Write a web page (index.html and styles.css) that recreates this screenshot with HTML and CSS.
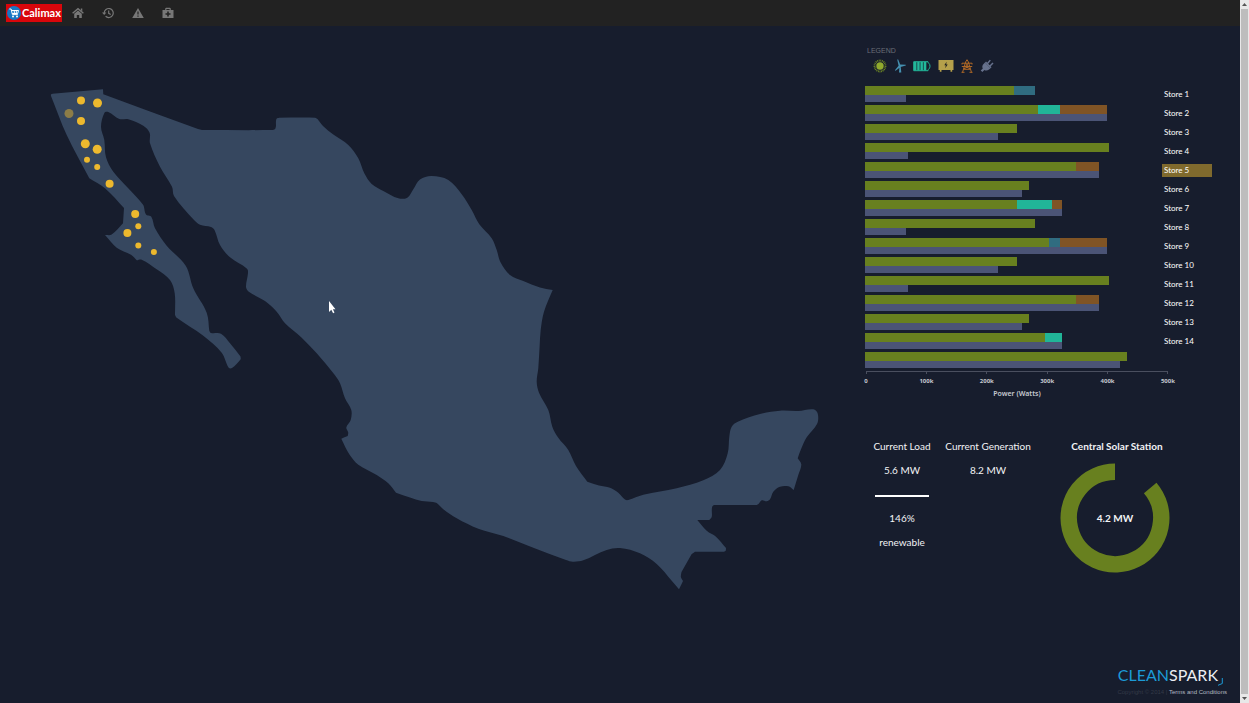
FILE: index.html
```html
<!DOCTYPE html>
<html lang="en">
<head>
<meta charset="utf-8">
<title>CleanSpark - Calimax</title>
<link rel="stylesheet" href="styles.css">
</head>
<body>
<div class="page">
  <header class="topbar">
    <a class="brand" href="#" aria-label="Calimax">
      <svg class="brand-mark" viewBox="0 0 14 14" aria-hidden="true"><circle cx="7" cy="7" r="7" fill="#1877c4"/><path d="M2.3 3h1.8l1.3 5.600h5.400M4.500 4.500h7l-.8 3H5.200M7.200 4.500l.2 3M9.400 4.500l-.2 3" fill="none" stroke="#fff" stroke-width="1"/><circle cx="6" cy="10.500" r="1" fill="#fff"/><circle cx="10" cy="10.500" r="1" fill="#fff"/></svg>
      <span>Calimax</span>
    </a>
    <nav class="nav">
      <a href="#" aria-label="Home"><svg viewBox="0 0 12 12"><path d="M.6 6.300 6 1.600l5.400 4.700" fill="none" stroke="currentColor" stroke-width="1.400"/><path d="M8.800 1.500h1.500v3l-1.500-1.300zM2.200 6.800 6 3.600l3.800 3.200V11H7.200V8H4.800v3H2.200z" fill="currentColor"/></svg></a>
      <a href="#" aria-label="History"><svg viewBox="0 0 12 12"><path d="M2.200 6a4.500 4.500 0 1 1 1.400 3.300M6.700 3.400V6.300l2 1.200" fill="none" stroke="currentColor" stroke-width="1.200"/><path d="M0 5.500h4.400L2.200 8z" fill="currentColor"/></svg></a>
      <a href="#" aria-label="Alerts"><svg viewBox="0 0 12 12"><path fill-rule="evenodd" d="M6 1 11.800 11H.2zM5.400 4.600v3h1.200v-3zm0 3.900v1.200h1.200V8.500z" fill="currentColor"/></svg></a>
      <a href="#" aria-label="Service"><svg viewBox="0 0 12 12"><path fill-rule="evenodd" d="M4 .8h4l.8.8V3H11.500v8H.5V3h2.700V1.600zM4.400 2v1h3.200V2zM5.200 4.500v1.700H3.500v1.600h1.700v1.700h1.600V7.800h1.700V6.200H6.800V4.500z" fill="currentColor"/></svg></a>
    </nav>
  </header>

  <main class="main">
    <section class="map" aria-label="Store map">
      <svg viewBox="0 26 855 600">
        <path id="land" class="land"/>
        <g class="pins">
          <circle cx="81" cy="100.500" r="4"/><circle cx="97.500" cy="103" r="4.500"/>
          <circle class="dim" cx="69" cy="113.500" r="4.500"/><circle cx="81" cy="121" r="4"/>
          <circle cx="85.300" cy="143.700" r="4.500"/><circle cx="97.200" cy="149.300" r="4.500"/>
          <circle cx="87" cy="159.700" r="3"/><circle cx="97.200" cy="167" r="3"/>
          <circle cx="109.600" cy="183.700" r="4"/><circle cx="135.200" cy="213.900" r="4"/>
          <circle cx="138.300" cy="226.300" r="3"/><circle cx="127.400" cy="233.100" r="4"/>
          <circle cx="138.300" cy="245.600" r="3"/><circle cx="153.900" cy="251.900" r="3"/>
        </g>
        <path class="cursor" d="M329 301v11l2.300-2.200 1.800 3.400 1.400-.8-1.600-3.200h2.600z"/>
      </svg>
    </section>

    <aside class="side">
      <section class="legend">
        <h2>LEGEND</h2>
        <div class="legend-icons">
          <svg width="14" height="14" viewBox="0 0 14 14"><circle cx="7" cy="7" r="5.500" fill="none" stroke="#6f8a25" stroke-width="1.800" stroke-dasharray=".9 .7"/><circle cx="7" cy="7" r="3.700" fill="#91ab2d"/></svg>
          <svg width="12" height="14" viewBox="0 0 12 14"><path d="M4.600 6.700 3.200.5h1l2 5 5.600.2v.8L6.500 8 1.600 11.800l-.7-.6zM5.500 7.500h1.200l.6 6H5z" fill="#4590b0"/></svg>
          <svg width="18" height="12" viewBox="0 0 18 12"><path d="M.7 1.700h14.300c0 2 2 1.500 2 4.500s-2 2.500-2 4.500H.7z" fill="none" stroke="#22b89b"/><path d="M1 2h2.500v8.500H1zm3.200 0h2.500v8.500H4.200zm3.200 0h2.500v8.500H7.400zm3.200 0h2.700v8.500h-2.700z" fill="#22b89b"/></svg>
          <svg width="16" height="12" viewBox="0 0 16 12"><path d="M.5 0h15v10h-1.300v1.800h-1.700V10h-9v1.800H1.800V10H.5z" fill="#b5a04b"/><path d="M8.600 1.800 6.300 5.300h1.500L7.200 8.200l2.500-3.700H8.200z" fill="#222"/></svg>
          <svg width="12" height="14" viewBox="0 0 12 14"><path d="M1.500 13.500 4.600 3 6 .7 7.400 3l3.100 10.500M1 4.200h10M.8 7.500h10.400M4.400 4l3.300 3.500-4.900 2.300M7.600 4 4.300 7.500l4.900 2.300M2.600 10.300h6.800M1 4v1.500M11 4v1.500M.5 13.300h3M8.500 13.300h3" fill="none" stroke="#ad6726" stroke-width="1"/></svg>
          <svg width="14" height="14" viewBox="0 0 14 14"><path d="m5 3.500 5.500 5.700-1.500 1.300c-1.500 1.200-3.300 1.300-4.600.5l-2 2-1.700-1.500L2.800 9.500C1.900 8 2.300 6.400 3.500 5z" fill="#66718c"/><path d="m7.300 4.800 3-3.700M9.500 7.500 13 4M5.500 3 11 8.700" stroke="#66718c" stroke-width="1.500"/></svg>
        </div>
      </section>

      <section class="chart" aria-label="Power by store">
        <ul class="rows">
          <li><div class="bars"><div class="gen"><i class="solar" style="width:49.3%"></i><i class="wind" style="width:7.1%"></i></div><div class="load" style="width:13.7%"></div></div><a href="#">Store 1</a></li>
          <li><div class="bars"><div class="gen"><i class="solar" style="width:57.3%"></i><i class="battery" style="width:7.3%"></i><i class="grid" style="width:15.6%"></i></div><div class="load" style="width:80.2%"></div></div><a href="#">Store 2</a></li>
          <li><div class="bars"><div class="gen"><i class="solar" style="width:50.3%"></i></div><div class="load" style="width:44.2%"></div></div><a href="#">Store 3</a></li>
          <li><div class="bars"><div class="gen"><i class="solar" style="width:80.8%"></i></div><div class="load" style="width:14.1%"></div></div><a href="#">Store 4</a></li>
          <li><div class="bars"><div class="gen"><i class="solar" style="width:69.9%"></i><i class="grid" style="width:7.6%"></i></div><div class="load" style="width:77.5%"></div></div><a class="active" href="#">Store 5</a></li>
          <li><div class="bars"><div class="gen"><i class="solar" style="width:54.3%"></i></div><div class="load" style="width:52%"></div></div><a href="#">Store 6</a></li>
          <li><div class="bars"><div class="gen"><i class="solar" style="width:50.3%"></i><i class="battery" style="width:11.6%"></i><i class="grid" style="width:3.3%"></i></div><div class="load" style="width:65.2%"></div></div><a href="#">Store 7</a></li>
          <li><div class="bars"><div class="gen"><i class="solar" style="width:56.3%"></i></div><div class="load" style="width:13.7%"></div></div><a href="#">Store 8</a></li>
          <li><div class="bars"><div class="gen"><i class="solar" style="width:60.9%"></i><i class="wind" style="width:3.7%"></i><i class="grid" style="width:15.6%"></i></div><div class="load" style="width:80.2%"></div></div><a href="#">Store 9</a></li>
          <li><div class="bars"><div class="gen"><i class="solar" style="width:50.3%"></i></div><div class="load" style="width:44.2%"></div></div><a href="#">Store 10</a></li>
          <li><div class="bars"><div class="gen"><i class="solar" style="width:80.8%"></i></div><div class="load" style="width:14.1%"></div></div><a href="#">Store 11</a></li>
          <li><div class="bars"><div class="gen"><i class="solar" style="width:69.9%"></i><i class="grid" style="width:7.6%"></i></div><div class="load" style="width:77.5%"></div></div><a href="#">Store 12</a></li>
          <li><div class="bars"><div class="gen"><i class="solar" style="width:54.3%"></i></div><div class="load" style="width:52%"></div></div><a href="#">Store 13</a></li>
          <li><div class="bars"><div class="gen"><i class="solar" style="width:59.6%"></i><i class="battery" style="width:5.6%"></i></div><div class="load" style="width:65.2%"></div></div><a href="#">Store 14</a></li>
          <li><div class="bars"><div class="gen"><i class="solar" style="width:86.8%"></i></div><div class="load" style="width:84.4%"></div></div></li>
        </ul>
        <div class="axis">
          <div class="ticks"><span></span><span></span><span></span><span></span><span></span></div>
          <div class="tick-labels"><span>0</span><span>100k</span><span>200k</span><span>300k</span><span>400k</span><span>500k</span></div>
          <p class="axis-title">Power (Watts)</p>
        </div>
      </section>

      <section class="stats">
        <div class="stat">
          <h3>Current Load</h3>
          <p>5.6 MW</p>
          <hr>
          <p>146%</p>
          <p>renewable</p>
        </div>
        <div class="stat wide">
          <h3>Current Generation</h3>
          <p>8.2 MW</p>
        </div>
        <div class="station">
          <h3>Central Solar Station</h3>
          <div class="donut">
            <svg viewBox="0 0 110 110" aria-hidden="true"><path d="M90.200 25A46.250 46.250 0 1 1 55 8.750" fill="none" stroke="#68801f" stroke-width="16.500"/></svg>
            <strong>4.2 MW</strong>
          </div>
        </div>
      </section>

      <footer class="footer">
        <div class="logo"><span class="clean">CLEAN</span><span>SPARK</span><svg width="5" height="8" viewBox="0 0 5 8" aria-hidden="true"><path d="M4.300 0v5.500L0 7.300" fill="none" stroke="#1c9ad6"/></svg></div>
        <p>Copyright © 2014 | <a href="#">Terms and Conditions</a></p>
      </footer>
    </aside>
  </main>
</div>
<div class="scrollbar" aria-hidden="true">
  <svg viewBox="0 0 9 9"><path d="M2 6h5L4.500 3z" fill="#555"/></svg>
  <div class="thumb"></div>
  <svg viewBox="0 0 9 9"><path d="M2 3h5L4.500 6z" fill="#555"/></svg>
</div>
<script src="map.js"></script>
</body>
</html>
```
FILE: map.js
```js
// Coastline as runs of points. Each run is a smooth curve; runs meet in corners.
const runs = [
  [[51,96],[51,94.5],[52.5,93.7]],
  [[52.5,93.7],[103,89.3]], [[103,89.3],[103.3,94.3]], [[103.3,94.3],[198,129],[202,130]],
  [[202,130],[272,130],[275,129],[276,126]], [[276,126],[276,121],[276.800,118.500],[279,117.700]],
  [[279,117.7],[315,117.7],[317.5,119]],
  [[317.5,119],[323,126],[333.3,134.5],[348.3,145],[358.3,158.3],[364.3,173.3],[371.7,184],[383.3,191],[398.3,198.3],[407.3,197.7],[413.3,189.3],[420,179.5],[431.7,176],[448.3,180],[461.7,194.3],[471.7,210],[479.3,224.3],[491.7,238.3],[496.7,250],[500.5,262.3],[510,275],[523.3,281],[540,287.5],[552.7,290]],
  [[552.7,290],[544,311.7],[540.7,330],[539.7,345],[538.3,368.3],[536.7,381.7],[539,392.7],[548.3,410],[552.3,426.7],[558.3,437.7],[568.3,450],[576,466],[587.3,481.7]],
  [[587.3,481.7],[599,485.5],[610,487.7],[618.3,492.7],[625,499.5],[628.3,500],[643.3,494.7],[676.7,488.3],[703.3,480.3],[720,470],[727.7,453.3],[729.3,436.7],[731.7,426.7],[738.3,421.5],[760,414],[780,410.7],[798.3,411],[813.3,409.3],[817.7,413.5],[817,424],[806.7,437.3],[800.7,450],[797.7,458.3]],
  [[797.7,458.3],[801.3,464.5],[798.3,475],[793.7,490]],
  [[793.7,490],[788.3,486.3],[780,486.7],[773.3,491.7],[770,499.3],[766.7,501.3],[761.7,500.3],[758.500,504],[756.7,505]],
  [[756.7,505],[714,505]], [[714,505],[712.3,506.5],[711.8,510],[711.7,517],[709.3,520]], [[709.3,520],[697.3,520]],
  [[697.3,520],[706.7,530.7],[716,536.7],[726,548]], [[726,548],[725.700,550.700],[724,551.7]], [[724,551.7],[695,551.7]],
  [[695,551.7],[691.7,554]], [[691.7,554],[681.500,572]], [[681.5,572],[680.900,577],[683,581]], [[683,581],[679,589.3]],
  [[679,589.3],[671.7,580.7],[656.7,564],[640,553.3],[620,548],[606.7,550],[583.3,560.3],[573,561.7],[566,560],[533.3,547.7],[503.3,536],[478.3,528.7],[456.7,518.3],[443.3,509.3],[437,503.3],[433,502],[421.7,501],[410,497.500],[396,492.7]],
  [[396,492.7],[388.3,483.3],[376.7,475],[358.3,464.7],[349.3,454.3],[341.3,438.7]],
  [[341.3,438.7],[347.7,436]], [[347.7,436],[348.2,432.5],[346.3,427.5],[350.7,420],[351.3,410],[345,398.3],[340,383.3],[334,374],[316.7,353.3],[301.7,337.7],[285,323.3],[276.7,311.7],[265,301],[248.8,291.7],[246,287],[248,273],[247,268.7],[230,257.3],[220,245],[214.500,230],[211,227],[200,224.8],[193.3,219.300],[174,196],[172,186.700],[160,166.700],[150,143.3],[149.600,132.700],[143.3,125.7],[128.3,119.3],[119.3,119],[108.3,112],[104.5,112.7],[101,126.7],[104.3,140],[106,157.3],[113.3,171.7],[142.7,204.3],[146,214.500],[151.3,216.7],[155,228.3],[166.7,245.7],[185.7,265.7],[193.3,288.3],[206.7,312.7],[209.3,331]],
  [[209.3,331],[211,333],[221,333.8],[230,343.3],[240.5,356.5]], [[240.5,356.5],[240.500,359.500],[232,368],[228.7,367.7],[221.7,352.7],[203.3,335.7],[176.7,317.7],[175,315]],
  [[175,315],[174.7,293.3],[170,280],[157,269.500],[141.7,259.7],[136.7,260.3]],
  [[136.7,260.3],[131,254.7],[116.7,247.7],[105,235]],
  [[105,235],[111.7,234.500],[123,223.3]], [[123,223.3],[124,208]],
  [[124,208],[105,188.3],[89.3,178.3]], [[89.3,178.3],[66.7,135],[51,96]]
];

function curve(points) {
  let d = "";
  for (let i = 0; i < points.length - 1; i++) {
    const a = points[i - 1] || points[i];
    const b = points[i];
    const c = points[i + 1];
    const e = points[i + 2] || c;
    // Handles are a third of their segment long, so uneven spacing stays smooth.
    const len = Math.hypot(c[0] - b[0], c[1] - b[1]) / 3;
    const tb = Math.hypot(c[0] - a[0], c[1] - a[1]) || 1;
    const tc = Math.hypot(e[0] - b[0], e[1] - b[1]) || 1;
    const p = [
      b[0] + (c[0] - a[0]) / tb * len, b[1] + (c[1] - a[1]) / tb * len,
      c[0] - (e[0] - b[0]) / tc * len, c[1] - (e[1] - b[1]) / tc * len,
      c[0], c[1]
    ];
    d += "C" + p.map(n => n.toFixed(1)).join(" ");
  }
  return d;
}

document.getElementById("land").setAttribute("d", "M" + runs[0][0].join(" ") + runs.map(curve).join("") + "Z");
```
FILE: styles.css
```css
* { box-sizing: border-box; }
body {
  margin: 0;
  display: flex;
  min-height: 100vh;
  background: #171d2d;
  color: #f2f3f5;
  font-family: "Open Sans", "Noto Sans", sans-serif;
  font-size: 10px;
}
h2, h3, p, ul { margin: 0; padding: 0; font-weight: 400; }
a { color: inherit; text-decoration: none; }

.page { flex: 1; min-width: 0; display: flex; flex-direction: column; }
.topbar {
  display: flex;
  align-items: center;
  gap: 10px;
  height: 26px;
  padding: 0 6px;
  background: #222;
}
.brand {
  display: flex;
  align-items: center;
  gap: 1px;
  height: 18px;
  padding: 0 1px;
  background: #d9060b;
  color: #fff;
  font: 700 11px/18px Lato, sans-serif;
}
.brand-mark { width: 14px; height: 14px; }
.nav { display: flex; gap: 18px; color: #777; }
.nav a, .nav svg { display: block; width: 12px; height: 12px; }

.main { flex: 1; display: grid; grid-template-columns: minmax(0, 1fr) 385px; }
.map svg { display: block; width: 100%; }
.land { fill: #36475f; }
.pins { fill: #edb92e; }
.pins .dim { fill: #8d7d47; }
.cursor { fill: #fff; }

.side { display: flex; flex-direction: column; padding: 20px 13px 6px 10px; }
.legend h2 { padding-left: 2px; color: #6a6e77; font: 7px/10px "Liberation Sans", sans-serif; }
.legend-icons { display: flex; align-items: center; gap: 7px; height: 20px; padding-left: 8px; margin-bottom: 10px; }

.rows { list-style: none; }
.rows li { display: flex; align-items: center; height: 19px; padding-bottom: 3px; }
.bars { flex: 0 0 302px; }
.gen { display: flex; height: 9px; }
.gen i { height: 9px; }
.load { height: 7px; background: #4b5476; }
.solar { background: #68801f; }
.wind { background: #306c80; }
.battery { background: #21b598; }
.grid { background: #805425; }
.rows a { flex: none; width: 50px; margin-left: -5px; padding-left: 2px; font: 8px/13px Lato, sans-serif; color: #fff; }
.rows a.active { background: #806a2d; }

.axis { width: 303px; padding-left: 1px; color: #c6c9d0; font: 700 6px/10px "Noto Sans", sans-serif; text-align: center; }
.ticks { display: flex; border-top: 1px solid #4a4f5f; border-right: 1px solid #4a4f5f; height: 3px; }
.ticks span { flex: 1; border-left: 1px solid #4a4f5f; }
.tick-labels { display: flex; justify-content: space-between; margin: 2px -15px 3px; }
.tick-labels span { width: 30px; }
.axis-title { font-size: 7px; font-weight: 600; }

.stats { display: flex; margin-top: 39px; line-height: 16px; text-align: center; font-family: Lato, sans-serif; }
.stats h3 { font-size: 10px; white-space: nowrap; }
.stat { display: flex; flex-direction: column; gap: 8px; margin-left: 10px; width: 54px; }
.stat.wide { width: 84px; margin-left: 17px; }
.stat h3 { align-self: center; }
.stat hr { width: 100%; height: 2px; margin: 9px 0 5px; border: 0; background: #fff; }
.station { width: 110px; margin-left: 30px; }
.station h3 { margin-left: 4px; font-weight: 700; }
.donut { display: grid; place-items: center; margin-top: 9px; }
.donut > * { grid-area: 1 / 1; }
.donut svg { width: 110px; height: 110px; }

.footer { display: flex; flex-direction: column; align-items: flex-end; margin-top: auto; color: #343a48; font: 6px/10px "Liberation Sans", sans-serif; }
.footer a { color: #b5b9c2; }
.logo { display: flex; align-items: flex-end; margin: 0 4px 1px 0; color: #eceef2; font: 16px/22px Lato, sans-serif; }
.logo .clean { color: #1c9ad6; }

.scrollbar { display: flex; flex-direction: column; width: 9px; background: #e8e8e8; }
.scrollbar svg { display: block; width: 9px; height: 9px; }
.thumb { flex: 1; margin: 0 1px; background: #bdbdbd; }
```
